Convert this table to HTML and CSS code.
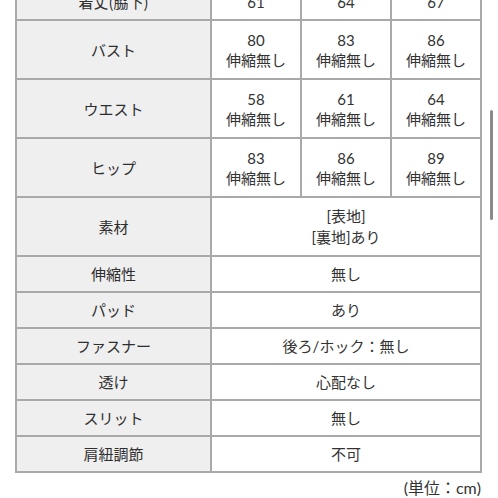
FILE: index.html
```html
<!DOCTYPE html>
<html lang="ja">
<head>
<meta charset="utf-8">
<link rel="stylesheet" href="styles.css">
</head>
<body>
<div class="page">
  <table class="size">
    <tr class="single">
      <th>着丈(脇下)</th><td>61</td><td>64</td><td>67</td>
    </tr>
    <tr class="double">
      <th>バスト</th><td>80<br>伸縮無し</td><td>83<br>伸縮無し</td><td>86<br>伸縮無し</td>
    </tr>
    <tr class="double">
      <th>ウエスト</th><td>58<br>伸縮無し</td><td>61<br>伸縮無し</td><td>64<br>伸縮無し</td>
    </tr>
    <tr class="double">
      <th>ヒップ</th><td>83<br>伸縮無し</td><td>86<br>伸縮無し</td><td>89<br>伸縮無し</td>
    </tr>
    <tr class="double material">
      <th>素材</th><td colspan="3">[表地]<br>[裏地]あり</td>
    </tr>
    <tr class="single">
      <th>伸縮性</th><td colspan="3">無し</td>
    </tr>
    <tr class="single">
      <th>パッド</th><td colspan="3">あり</td>
    </tr>
    <tr class="single">
      <th>ファスナー</th><td colspan="3">後ろ/ホック：無し</td>
    </tr>
    <tr class="single">
      <th>透け</th><td colspan="3">心配なし</td>
    </tr>
    <tr class="single">
      <th>スリット</th><td colspan="3">無し</td>
    </tr>
    <tr class="single">
      <th>肩紐調節</th><td colspan="3">不可</td>
    </tr>
  </table>
  <p class="unit">(単位：cm)</p>
</div>
<div class="scrollbar"></div>
</body>
</html>
```

FILE: styles.css
```css
html, body {
  margin: 0;
  padding: 0;
  background: #ffffff;
  overflow: hidden;
}
body {
  width: 498px;
  height: 498px;
  position: relative;
  font-family: "Lato", "Noto Sans CJK JP", sans-serif;
  color: #333333;
}
.page {
  margin-top: -17px;
  padding-left: 15px;
  width: 467px;
}
.size {
  border-collapse: collapse;
  width: 467px;
  table-layout: fixed;
}
.size th, .size td {
  border: 2px solid #a9a9a9;
  padding: 0;
  text-align: center;
  vertical-align: middle;
  font-size: 15px;
  font-weight: normal;
  line-height: 20px;
}
.size th {
  width: 193px;
  background: #efefef;
  font-family: "Noto Sans CJK JP", sans-serif;
  color: #2e2e2e;
}
.size td {
  background: #ffffff;
}
.size tr.single th, .size tr.single td {
  height: 34px;
}
.size tr.double th, .size tr.double td {
  height: 57px;
}
.size tr.material td {
  line-height: 21px;
}
.unit {
  margin: 4px 0 0 0;
  padding-right: 1px;
  text-align: right;
  font-size: 16px;
  line-height: 22px;
  color: #333333;
}
.scrollbar {
  position: absolute;
  left: 490px;
  top: 110px;
  width: 3px;
  height: 110px;
  border-radius: 2px;
  background: #8a8a8a;
}
```
